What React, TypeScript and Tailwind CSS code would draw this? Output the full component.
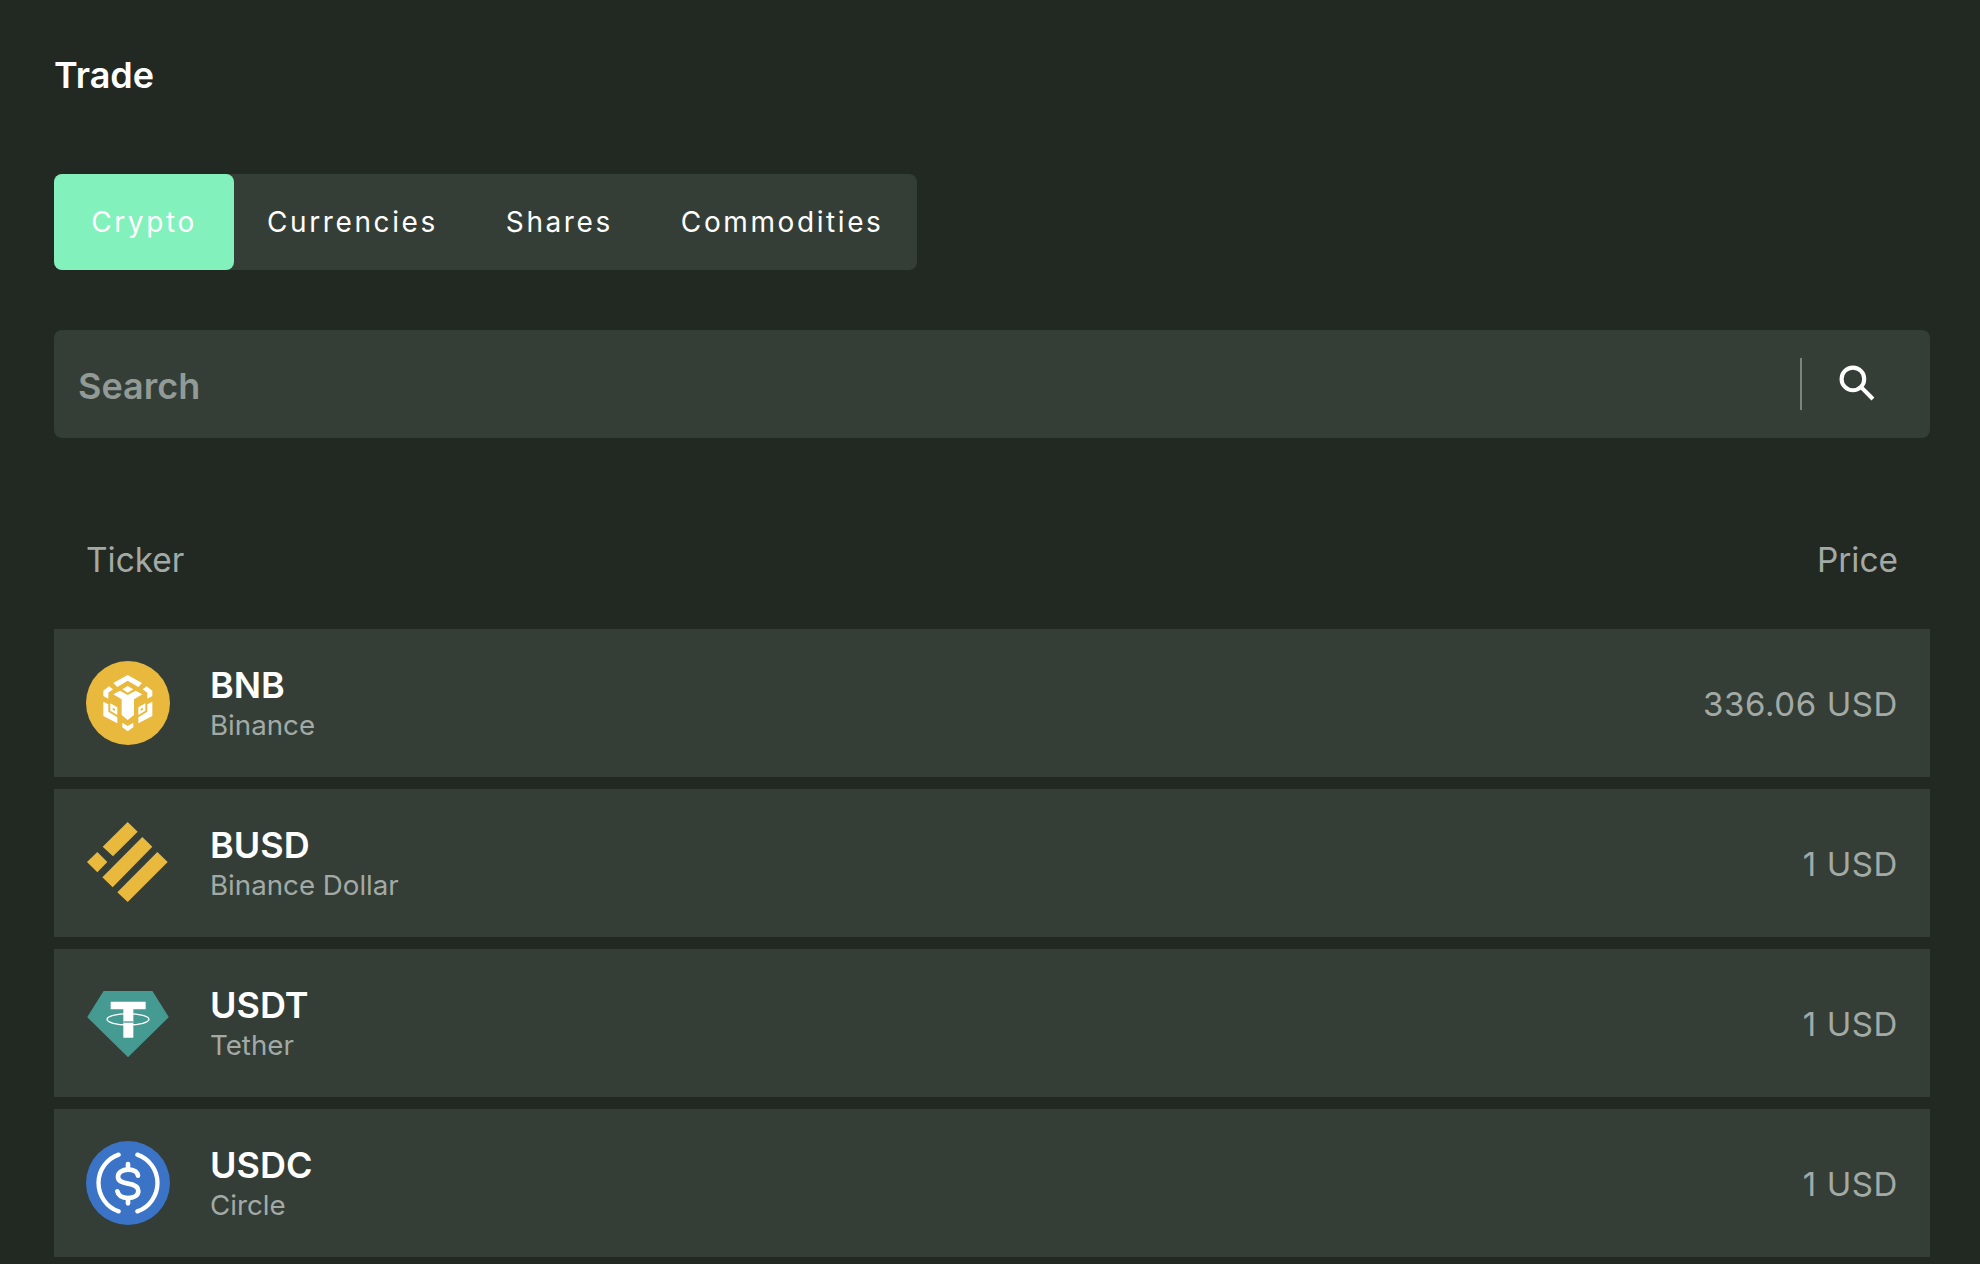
import { ReactNode } from "react";

const tabs = ["Crypto", "Currencies", "Shares", "Commodities"];

function BnbIcon() {
  return (
    <svg viewBox="78 63 252 252" className="h-[84px] w-[84px] shrink-0">
      <circle cx="204" cy="189" r="126" fill="#e9b93e" />
      <g fill="#fff">
        <path d="M203 105l43 24-11 12-32-19-31 19-12-12z" />
        <path d="M203 138l17 10-17 10-16-10z" />
        <path d="M130 152l17-13 12 9-14 10v18l-15-8z" />
        <path d="M277 152l-17-13-12 9 14 10v18l15-8z" />
        <path d="M160 163l20-11 23 13 24-13 20 11-25 15v47l-19 15-18-15v-47z" />
        <path d="M130 185l15 8v22l27 17v18l-42-22z" />
        <path d="M277 185l-15 8v22l-27 17v18l42-22z" />
        <path fillRule="evenodd" d="M151 190l21 12v23l-21-13zM158 203v6l7 4v-6z" />
        <path fillRule="evenodd" d="M256 190l-21 12v23l21-13zM249 203v6l-7 4v-6z" />
        <path d="M187 248l16 10 17-10v14l-17 12-16-12z" />
      </g>
    </svg>
  );
}

function BusdIcon() {
  return (
    <svg viewBox="78 544 252 252" className="h-[84px] w-[84px] shrink-0">
      <g fill="#e9b93e">
        <path d="M203 547l30 29-74 74-31-29z" />
        <path d="M112 637l30 30-30 31-31-31z" />
        <path d="M247 592l30 29-119 122-31-30z" />
        <path d="M292 637l31 30-120 120-31-29z" />
      </g>
    </svg>
  );
}

function UsdtIcon() {
  return (
    <svg viewBox="78 30 252 252" className="h-[84px] w-[84px] shrink-0">
      <path
        d="M132 62h144l48 76-120 118-120-118z"
        fill="#459a92"
        stroke="#459a92"
        strokeWidth="4"
        strokeLinejoin="round"
      />
      <path d="M152 92h105v23h-37v85h-30v-85h-38z" fill="#fff" />
      <path d="M190 153h30" stroke="#459a92" strokeWidth="4" />
      <ellipse cx="204" cy="145" rx="63" ry="17" fill="none" stroke="#fff" strokeWidth="4" />
    </svg>
  );
}

function UsdcIcon() {
  return (
    <svg viewBox="78 513 252 252" className="h-[84px] w-[84px] shrink-0">
      <circle cx="204" cy="639" r="126" fill="#3b73c6" />
      <g fill="none" stroke="#fff" strokeLinecap="round">
        <path d="M176 554a90 90 0 0 0 0 170" strokeWidth="13" />
        <path d="M232 554a90 90 0 0 1 0 170" strokeWidth="13" />
        <path
          d="M234 617c-2-12-14-18-30-18-18 0-30 9-30 21 0 14 13 18 30 21 18 3 31 8 31 22 0 13-13 21-31 21-17 0-29-7-32-20"
          strokeWidth="14"
        />
        <path d="M204 582v16M204 684v16" strokeWidth="14" />
      </g>
    </svg>
  );
}

const rows: { ticker: string; name: string; price: string; icon: ReactNode }[] = [
  { ticker: "BNB", name: "Binance", price: "336.06 USD", icon: <BnbIcon /> },
  { ticker: "BUSD", name: "Binance Dollar", price: "1 USD", icon: <BusdIcon /> },
  { ticker: "USDT", name: "Tether", price: "1 USD", icon: <UsdtIcon /> },
  { ticker: "USDC", name: "Circle", price: "1 USD", icon: <UsdcIcon /> },
];

export default function App() {
  return (
    <div className="h-screen overflow-hidden bg-[#222822] pl-[54px] pr-[50px] pt-[51px] font-['Inter',sans-serif]">
      <h1 className="text-[36px] leading-[48px] font-semibold text-white">Trade</h1>

      <div className="mt-[75px] flex h-[96px] w-[863px] items-center rounded-lg bg-[#343e37] text-[28px] tracking-[2.6px] text-white">
        {tabs.map((tab, i) => (
          <button
            key={tab}
            className={
              i === 0
                ? "h-full w-[180px] shrink-0 rounded-lg bg-[#82f1bc]"
                : "h-full shrink-0 pl-[33px] pr-[35px]"
            }
          >
            {tab}
          </button>
        ))}
      </div>

      <div className="mt-[60px] flex h-[108px] items-center rounded-lg bg-[#343e37] pl-6">
        <input
          placeholder="Search"
          className="min-w-0 flex-1 bg-transparent pt-1 text-[36px] font-semibold outline-none placeholder:text-[#929a95]"
        />
        <div className="flex h-[52px] w-[130px] shrink-0 items-center border-l-2 border-[#7d837f] pl-[36px]">
          <svg viewBox="0 0 36 36" className="-mt-1 h-[37px] w-[37px]" fill="none" stroke="#fff" strokeWidth="4">
            <circle cx="14.5" cy="14.5" r="11" />
            <path d="M22.5 22.5L34 34" />
          </svg>
        </div>
      </div>

      <div className="mt-[92px] flex items-center justify-between px-8 text-[33.4px] leading-[60px] text-[#a3aaa5]">
        <span>Ticker</span>
        <span>Price</span>
      </div>

      <div className="mt-[39px] flex flex-col gap-3">
        {rows.map((row) => (
          <div
            key={row.ticker}
            className="flex h-[148px] shrink-0 items-center justify-between bg-[#343e37] px-8"
          >
            <div className="flex items-center gap-10">
              {row.icon}
              <div className="pt-0.5">
                <div className="text-[36px] leading-[42px] font-semibold text-white">{row.ticker}</div>
                <div className="text-[27.7px] leading-[38px] text-[#a3aaa5]">{row.name}</div>
              </div>
            </div>
            <div className="pt-1 text-[33px] tracking-[0.6px] text-[#a3aaa5]">{row.price}</div>
          </div>
        ))}
      </div>
    </div>
  );
}
